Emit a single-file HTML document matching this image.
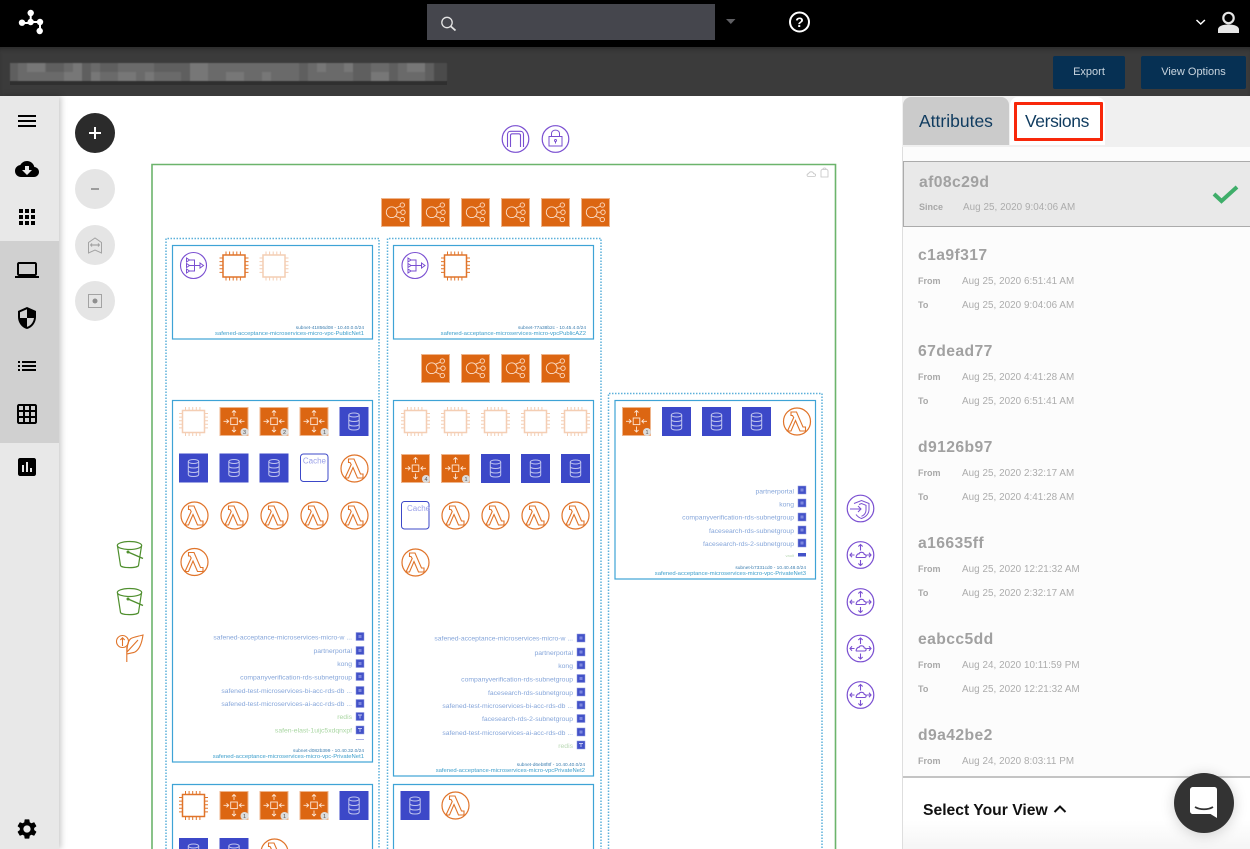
<!DOCTYPE html>
<html><head><meta charset="utf-8"><title>Versions</title>
<style>
*{box-sizing:border-box}
html,body{margin:0;padding:0;width:1250px;height:849px;overflow:hidden;background:#fff;font-family:"Liberation Sans",sans-serif}
.a{position:absolute}
#top{left:0;top:0;width:1250px;height:47px;background:#000}
#sub{left:0;top:47px;width:1250px;height:49px;background:#3b3b3b;box-shadow:inset 0 4px 4px -2px #2a2a2a}
#side{left:0;top:96px;width:59px;height:753px;background:#e8e8e8;box-shadow:2px 0 6px rgba(0,0,0,.22)}
#act{left:0;top:241px;width:59px;height:202px;background:#d0d0d0}
.btn{top:56px;height:33px;background:#063053;color:#c9d5df;font-size:11px;line-height:33px;text-align:center;border-radius:2px}
#panel{left:902px;top:96px;width:348px;height:753px;background:#fcfcfc}
#line{left:0;top:0;width:1px;height:753px;background:#dedede}
#tabs{left:0;top:0;width:348px;height:51px;background:#f0f0f0}
#t1{left:1px;top:1px;width:106px;height:48px;background:#cbcbcb;border-radius:8px 8px 0 0;color:#0f3b5f;font-size:17.5px;line-height:49px;padding-left:16px}
#t2{left:108px;top:1px;width:95px;height:48px;background:#fff;border-radius:8px 8px 0 0}
#t3{left:112px;top:6px;width:89px;height:39px;border:3px solid #f8280a;border-radius:1px;color:#0f3b5f;font-size:17.5px;letter-spacing:-.4px;line-height:33px;padding-left:8px}
#sel{left:1px;top:65px;width:347px;height:66px;background:#e9e9e9;border:1px solid #ababab;border-right:0}
.h{color:#a1a1a1;font-weight:bold;font-size:15.7px;line-height:18px;letter-spacing:.4px;white-space:nowrap;margin-top:1px}
.l{color:#a8a8a8;font-weight:bold;font-size:9px;line-height:12px}
.d{color:#acacac;font-size:9.85px;line-height:12px;white-space:nowrap;letter-spacing:.05px;margin-top:1px}
#foot{left:0;top:680px;width:348px;height:73px;background:linear-gradient(#fff,#fff 60%,#f5f5f5);border-top:2px solid #c4c4c4}
#sv{left:21px;top:705px;font-size:15.7px;font-weight:bold;color:#111;line-height:20px;white-space:nowrap}
</style></head><body>
<div class="a" id="top"></div>
<div class="a" id="sub"></div>
<div class="a" id="side"></div>
<div class="a" id="act"></div>
<div class="a" style="left:427px;top:4px;width:288px;height:36px;background:#45464d"></div>
<div class="a btn" style="left:1053px;width:72px">Export</div>
<div class="a btn" style="left:1141px;width:105px">View Options</div>

<svg class="a" style="left:0;top:0" width="1250" height="849" viewBox="0 0 1250 849" xmlns="http://www.w3.org/2000/svg">
<defs>
<filter id="bl"><feGaussianBlur stdDeviation=".5"/></filter>
<g id="elb"><rect x=".5" y=".5" width="28" height="28" fill="#dc6612" stroke="#efb58c"/><g fill="none" stroke="#fbdcc6" stroke-width=".9"><circle cx="10.7" cy="14.2" r="5.4"/><circle cx="21.3" cy="7" r="2.2"/><circle cx="22" cy="14.2" r="2.2"/><circle cx="21.3" cy="21.5" r="2.2"/><path d="M16 14.2h3.8M14.5 10.2l5-2.2M14.5 18.2l5 2.2"/></g></g>
<g id="chip"><rect x="3.5" y="3.5" width="22" height="22" fill="#fff" stroke="#e0742a" stroke-width="1.5"/><g stroke="#e0742a" stroke-width="3" stroke-dasharray="1 2.6" fill="none"><path d="M6 1.5H24M6 27.5H24M1.5 6V24M27.5 6V24"/></g></g>
<g id="scale"><rect x=".5" y=".5" width="28" height="28" fill="#dc6612" stroke="#efb58c"/><g fill="none" stroke="#fde6d6" stroke-width=".9"><rect x="11.2" y="11" width="6.6" height="6.6"/><path d="M14.5 9V3.500M12.500 5.500l2-2 2 2M14.500 19.500V25M12.500 23l2 2 2-2M9.200 14.300H4M7 12.300l2.200 2-2.200 2M19.800 14.300H25M22 12.300l-2.200 2 2.200 2"/></g></g>
<g id="db"><rect width="29" height="29" fill="#3c48c8"/><g fill="none" stroke="#bfc4ee" stroke-width="1"><ellipse cx="14.500" cy="8" rx="5.200" ry="2"/><path d="M9.300 8V21c0 1.200 2.300 2 5.200 2s5.200-.8 5.200-2V8M9.300 12.500c0 1.200 2.300 2 5.200 2s5.200-.8 5.200-2M9.300 17c0 1.200 2.300 2 5.200 2s5.200-.8 5.200-2"/></g></g>
<g id="lam"><circle cx="14.500" cy="14.500" r="13.500" fill="#fff" stroke="#e0742a" stroke-width="1.200"/><path d="M8.500 5h5.500l6.500 15h2.500v4h-5.500L13 13.500 8.500 24H5l6.200-13.500-1.200-2H8.500z" fill="none" stroke="#e0742a" stroke-width="1.100"/></g>
<g id="b1"><circle cx="25" cy="25" r="4" fill="#dcdcdc"/><text x="25" y="27" font-size="5.500" text-anchor="middle" fill="#555">1</text></g>
<g id="b2"><circle cx="25" cy="25" r="4" fill="#dcdcdc"/><text x="25" y="27" font-size="5.500" text-anchor="middle" fill="#555">2</text></g>
<g id="b3"><circle cx="25" cy="25" r="4" fill="#dcdcdc"/><text x="25" y="27" font-size="5.500" text-anchor="middle" fill="#555">3</text></g>
<g id="b4"><circle cx="25" cy="25" r="4" fill="#dcdcdc"/><text x="25" y="27" font-size="5.500" text-anchor="middle" fill="#555">4</text></g>
<g id="nat"><circle cx="13.500" cy="13.500" r="13" fill="#fff" stroke="#7a4fd1" stroke-width="1.100"/><g fill="none" stroke="#7a4fd1" stroke-width="1"><path d="M6.500 6 9.500 8 6.500 10zM6.500 11.500l3 2-3 2zM6.500 17l3 2-3 2zM20 11l3.500 2.500-3.500 2.500zM9.500 8h5v11h-5M9.500 13.500H20M14.500 13.500H20"/></g></g>
<g id="gw"><circle cx="14" cy="14" r="13.300" fill="#fff" stroke="#7a4fd1" stroke-width="1.200"/><g fill="none" stroke="#7a4fd1" stroke-width="1.100"><path d="M14 9.500V3.500M11.800 5.500 14 3.500l2.200 2M14 19V24.500M11.800 22.500l2.200 2 2.200-2M8 14H3.500M5.500 11.800 3.500 14l2 2.200M20 14h4.500M22.500 11.800l2 2.200-2 2.200"/><path d="M10 16.500h8c2.200 0 2.200-3-.2-3-.4-2.600-4.600-3-5.300-.6-2-.6-3.600 3.600-2.500 3.600z"/></g></g>
<g id="mini"><rect width="8" height="8" fill="#4352c8" stroke="#8e97e0" stroke-width=".5"/><rect x="2.500" y="2.500" width="3" height="3" fill="#7f89de"/></g>
<g id="mg"><rect width="8" height="8" fill="#4352c8" stroke="#8e97e0" stroke-width=".5"/><path d="M2 2.500h4M4 2.500V6" stroke="#c3c8f2" stroke-width=".9"/></g>
<g id="bucket" fill="none" stroke="#4f8f2e" stroke-width="1.200"><ellipse cx="12.500" cy="4.500" rx="12.200" ry="4"/><path d="M.5 5 3.500 24.500c1 2.800 17 2.800 18 0L24.500 5"/><path d="M11 11l15 6.500" stroke-width="1.400"/><circle cx="11" cy="11" r=".9" fill="#4f8f2e"/></g>
</defs>

<!-- logo -->
<g fill="#fff" stroke="#fff"><path d="M30.700 13V22H40V31M22 23H30.700" stroke-width="2" fill="none"/><g stroke="none"><circle cx="30.700" cy="13" r="3.200"/><circle cx="30.700" cy="22" r="3.200"/><circle cx="22" cy="22.700" r="3.200"/><circle cx="40" cy="22" r="3.200"/><circle cx="39.700" cy="31" r="3.200"/></g></g>
<!-- top icons -->
<g fill="none" stroke="#e4e4e4"><circle cx="447" cy="22.500" r="5.200" stroke-width="1.300"/><path d="M451 26.500l4.500 4" stroke-width="1.800"/></g>
<path d="M726 19h9.500l-4.700 5z" fill="#5f5f63"/>
<circle cx="799.500" cy="22" r="9.500" fill="none" stroke="#fff" stroke-width="2"/>
<text x="799.500" y="27.200" text-anchor="middle" font-size="14" font-weight="bold" fill="#fff">?</text>
<path d="M1196.500 20l4.200 4 4.200-4" fill="none" stroke="#fff" stroke-width="1.500"/>
<circle cx="1228.500" cy="18" r="5.200" fill="none" stroke="#e6e6e6" stroke-width="2.200"/>
<path d="M1218 33v-3.500c0-3 4-5 10.500-5s10.500 2 10.500 5V33z" fill="#e6e6e6"/>

<!-- mosaic -->
<rect x="10" y="81" width="437" height="4" fill="#2f2f2f"/>
<g filter="url(#bl)">
<rect x="10" y="63" width="437" height="18" fill="#6a6a6a"/>
<g fill="#777"><rect x="27" y="63" width="18" height="9"/><rect x="64" y="72" width="18" height="9"/><rect x="91" y="72" width="9" height="9"/><rect x="118" y="72" width="18" height="9"/><rect x="145" y="72" width="9" height="9"/><rect x="190" y="63" width="18" height="18"/><rect x="226" y="72" width="18" height="9"/><rect x="262" y="72" width="9" height="9"/><rect x="317" y="63" width="9" height="9"/><rect x="344" y="63" width="9" height="9"/><rect x="371" y="72" width="18" height="9"/><rect x="407" y="63" width="18" height="9"/><rect x="73" y="63" width="9" height="9"/></g>
<g fill="#5e5e5e"><rect x="10" y="63" width="8" height="18"/><rect x="46" y="63" width="18" height="9"/><rect x="82" y="63" width="9" height="18"/><rect x="100" y="63" width="18" height="9"/><rect x="154" y="63" width="27" height="9"/><rect x="181" y="63" width="9" height="18"/><rect x="299" y="63" width="9" height="18"/><rect x="353" y="63" width="18" height="18"/><rect x="389" y="63" width="9" height="18"/><rect x="425" y="63" width="9" height="18"/><rect x="434" y="63" width="13" height="18" fill="#4c4c4c"/></g>
</g>

<!-- sidebar icons -->
<g fill="#000">
<rect x="18" y="115" width="18" height="2"/><rect x="18" y="120" width="18" height="2"/><rect x="18" y="125" width="18" height="2"/>
<path transform="translate(15 157)" d="M19.350 10.040C18.670 6.590 15.640 4 12 4 9.110 4 6.600 5.640 5.350 8.040 2.340 8.360 0 10.910 0 14c0 3.310 2.690 6 6 6h13c2.760 0 5-2.240 5-5 0-2.640-2.050-4.780-4.650-4.960zM17 13l-5 5-5-5h3V9h4v4h3z"/>
<g><rect x="19" y="209" width="4" height="4"/><rect x="25" y="209" width="4" height="4"/><rect x="31" y="209" width="4" height="4"/><rect x="19" y="215" width="4" height="4"/><rect x="25" y="215" width="4" height="4"/><rect x="31" y="215" width="4" height="4"/><rect x="19" y="221" width="4" height="4"/><rect x="25" y="221" width="4" height="4"/><rect x="31" y="221" width="4" height="4"/></g>
<path transform="translate(15 258)" d="M20 18c1.100 0 1.990-.9 1.990-2L22 6c0-1.100-.9-2-2-2H4c-1.100 0-2 .9-2 2v10c0 1.100.9 2 2 2H0v2h24v-2h-4zM4 6h16v10H4V6z"/>
<path transform="translate(15 306)" d="M12 1L3 5v6c0 5.550 3.840 10.740 9 12 5.160-1.260 9-6.450 9-12V5l-9-4zm0 10.990h7c-.53 4.120-3.280 7.790-7 8.940V12H5V6.300l7-3.110v8.800z"/>
<path transform="translate(15 354)" d="M3 13h2v-2H3v2zm0 4h2v-2H3v2zm0-8h2V7H3v2zm4 4h14v-2H7v2zm0 4h14v-2H7v2zM7 7v2h14V7H7z"/>
<path transform="translate(15 402)" d="M20 2H4c-1.100 0-2 .9-2 2v16c0 1.100.9 2 2 2h16c1.100 0 2-.9 2-2V4c0-1.100-.9-2-2-2zM8 20H4v-4h4v4zm0-6H4v-4h4v4zm0-6H4V4h4v4zm6 12h-4v-4h4v4zm0-6h-4v-4h4v4zm0-6h-4V4h4v4zm6 12h-4v-4h4v4zm0-6h-4v-4h4v4zm0-6h-4V4h4v4z"/>
<path transform="translate(15 455)" d="M19 3H5c-1.100 0-2 .9-2 2v14c0 1.100.9 2 2 2h14c1.100 0 2-.9 2-2V5c0-1.100-.9-2-2-2zM9 17H7v-7h2v7zm4 0h-2V7h2v10zm4 0h-2v-4h2v4z"/>
<path transform="translate(15 817)" d="M19.140 12.940c.04-.3.06-.61.06-.94 0-.32-.02-.64-.07-.94l2.030-1.580c.18-.14.23-.41.12-.61l-1.920-3.320c-.12-.22-.37-.29-.59-.22l-2.390.96c-.5-.38-1.030-.7-1.620-.94l-.36-2.540c-.04-.24-.24-.41-.48-.41h-3.840c-.24 0-.43.17-.47.41l-.36 2.540c-.59.24-1.130.57-1.620.94l-2.390-.96c-.22-.08-.47 0-.59.22L2.740 8.870c-.12.21-.08.47.12.61l2.030 1.580c-.05.3-.09.63-.09.94s.02.64.07.94l-2.030 1.580c-.18.14-.23.41-.12.61l1.920 3.320c.12.22.37.29.59.22l2.390-.96c.5.38 1.030.7 1.620.94l.36 2.540c.05.24.24.41.48.41h3.840c.24 0 .44-.17.47-.41l.36-2.540c.59-.24 1.130-.56 1.620-.94l2.390.96c.22.08.47 0 .59-.22l1.920-3.320c.12-.22.07-.47-.12-.61l-2.010-1.580zM12 15.600c-1.980 0-3.600-1.620-3.600-3.600s1.620-3.600 3.600-3.600 3.600 1.620 3.600 3.600-1.620 3.600-3.600 3.600z"/>
</g>

<!-- zoom buttons -->
<circle cx="95" cy="133" r="20" fill="#2b2b2b"/><path d="M95 127v12M89 133h12" stroke="#fff" stroke-width="2"/>
<circle cx="95" cy="189" r="20" fill="#e5e5e5"/><path d="M91 189h8" stroke="#9c9c9c" stroke-width="2"/>
<circle cx="95" cy="245" r="20" fill="#e5e5e5"/><g fill="none" stroke="#a3a3a3" stroke-width="1"><path d="M88.500 242.500 95 238l6.500 4.500V253l-6.500-3-6.500 3z"/><path d="M90.500 245h9M90.500 245l1.500-1.500M90.500 245l1.500 1.500M99.500 245l-1.500-1.500M99.500 245l-1.500 1.500" stroke-width="1.200"/></g>
<circle cx="95" cy="301" r="20" fill="#e5e5e5"/><rect x="88.500" y="294.500" width="13" height="13" fill="none" stroke="#a3a3a3"/><circle cx="95" cy="301" r="2.500" fill="#8f8f8f"/>

<!-- top circles -->
<g fill="none" stroke="#7a4fd1"><circle cx="515.500" cy="139" r="13.300" stroke-width="1.200"/><path d="M507.500 147V134.500c0-1.800 1.200-3.200 3-3.200h10c1.800 0 3 1.400 3 3.200V147M510.500 147V135.500c0-1 .7-1.700 1.700-1.700h6.600c1 0 1.700.7 1.700 1.700V147" stroke-width="1.100"/><circle cx="555.500" cy="139" r="13.300" stroke-width="1.200"/><rect x="549" y="136.500" width="13" height="9.500" stroke-width="1"/><path d="M551.500 136.500v-3c0-4.500 8-4.500 8 0v3M555.500 143.500v-2" stroke-width="1"/><circle cx="555.500" cy="140.500" r="1"/></g>

<!-- VPC frame -->
<path d="M152 849V164.500H835.500V849" fill="none" stroke="#6cb46c" stroke-width="1.600"/>
<g fill="none" stroke="#c4c4c4" stroke-width=".8"><path d="M808.500 176.500c-2 0-2-2.800.2-2.800.5-2.500 4.300-2.500 5 0 2.500 0 2.500 2.800 0 2.800zM821 177v-6c0-1 .5-1.500 1.500-1.500h4c1 0 1.500.5 1.500 1.500v6zM822.800 169.500c0-2 3.400-2 3.400 0"/></g>
<g fill="none" stroke="#5cb0da" stroke-width="1.500" stroke-dasharray="1.500 1.500">
<path d="M166 849V238.500H379V849"/><path d="M387.500 849V238.500H601V849"/><path d="M608.500 849V393.500H822V849"/>
</g>
<g fill="none" stroke="#3ea3d6" stroke-width="1.200">
<rect x="172.500" y="245.500" width="200" height="93.500"/><rect x="393.500" y="245.500" width="200" height="93.500"/>
<rect x="172.500" y="400.500" width="200" height="361.500"/><rect x="393.500" y="400.500" width="200" height="375.500"/>
<rect x="615" y="400.500" width="200.500" height="178.500"/>
<path d="M172.500 849V784.500H372.500V849M393.500 849V784.500H593.500V849"/>
</g>

<!-- ELB rows -->
<use href="#elb" x="381" y="198"/><use href="#elb" x="421" y="198"/><use href="#elb" x="461" y="198"/><use href="#elb" x="501" y="198"/><use href="#elb" x="541" y="198"/><use href="#elb" x="581" y="198"/>
<use href="#elb" x="421" y="354"/><use href="#elb" x="461" y="354"/><use href="#elb" x="501" y="354"/><use href="#elb" x="541" y="354"/>

<!-- public subnets -->
<use href="#nat" x="180" y="252"/><use href="#chip" x="219.500" y="251.500"/><use href="#chip" x="259.500" y="251.500" opacity=".35"/>
<use href="#nat" x="401.500" y="252"/><use href="#chip" x="441" y="251.500"/>
<text x="364" y="329" font-size="4.800" text-anchor="end" fill="#3d7fb0">subnet-41856d08 - 10.40.0.0/24</text>
<text x="364" y="335" font-size="5.900" text-anchor="end" fill="#3d9fcc">safened-acceptance-microservices-micro-vpc-PublicNet1</text>
<text x="586" y="329" font-size="4.800" text-anchor="end" fill="#3d7fb0">subnet-77a38b2c - 10.45.4.0/24</text>
<text x="586" y="335" font-size="5.900" text-anchor="end" fill="#3d9fcc">safened-acceptance-microservices-micro-vpcPublicAZ2</text>

<!-- subnet 1 -->
<use href="#chip" x="179" y="407" opacity=".35"/>
<use href="#scale" x="219.500" y="407"/><use href="#b3" x="219.500" y="407"/>
<use href="#scale" x="259.500" y="407"/><use href="#b2" x="259.500" y="407"/>
<use href="#scale" x="299.500" y="407"/><use href="#b1" x="299.500" y="407"/>
<use href="#db" x="339.500" y="407"/>
<use href="#db" x="179" y="453.500"/><use href="#db" x="219.500" y="453.500"/><use href="#db" x="259.500" y="453.500"/>
<rect x="300.500" y="454" width="27.500" height="27.500" rx="3" fill="#fff" stroke="#3c48c8" stroke-width="1"/><text x="326" y="463.500" font-size="8" text-anchor="end" fill="#9aa0e8">Cache</text>
<use href="#lam" x="340" y="454"/>
<use href="#lam" x="180" y="501"/><use href="#lam" x="220" y="501"/><use href="#lam" x="260" y="501"/><use href="#lam" x="300" y="501"/><use href="#lam" x="340" y="501"/>
<use href="#lam" x="180" y="547.500"/>
<g font-size="6.800" text-anchor="end" fill="#86a6da">
<text x="352" y="639.300">safened-acceptance-microservices-micro-w ...</text>
<text x="352" y="653">partnerportal</text>
<text x="352" y="666">kong</text>
<text x="352" y="679.300">companyverification-rds-subnetgroup</text>
<text x="352" y="693">safened-test-microservices-bi-acc-rds-db ...</text>
<text x="352" y="706">safened-test-microservices-ai-acc-rds-db ...</text>
<text x="352" y="719" fill="#a9d6a2">redis</text>
<text x="352" y="732.300" fill="#a9d6a2">safen-elast-1uijc5xdqnxpf</text>
</g>
<use href="#mini" x="356" y="632.500"/><use href="#mini" x="356" y="646.500"/><use href="#mini" x="356" y="659.500"/><use href="#mini" x="356" y="672.500"/><use href="#mini" x="356" y="686.500"/><use href="#mini" x="356" y="699.500"/><use href="#mg" x="356" y="712.500"/><use href="#mg" x="356" y="726"/>
<rect x="356" y="739" width="8" height="1" fill="#aab0e8"/>
<text x="364" y="752" font-size="4.800" text-anchor="end" fill="#3d7fb0">subnet-d082b399 - 10.40.32.0/24</text>
<text x="364" y="758" font-size="5.900" text-anchor="end" fill="#3d9fcc">safened-acceptance-microservices-micro-vpc-PrivateNet1</text>

<!-- subnet 2 -->
<use href="#chip" x="401" y="407" opacity=".35"/><use href="#chip" x="441" y="407" opacity=".35"/><use href="#chip" x="481" y="407" opacity=".35"/><use href="#chip" x="521" y="407" opacity=".35"/><use href="#chip" x="561" y="407" opacity=".35"/>
<use href="#scale" x="401" y="454"/><use href="#b4" x="401" y="454"/>
<use href="#scale" x="441" y="454"/><use href="#b1" x="441" y="454"/>
<use href="#db" x="481" y="454"/><use href="#db" x="521" y="454"/><use href="#db" x="561" y="454"/>
<rect x="401.500" y="501.500" width="27.500" height="27.500" rx="3" fill="#fff" stroke="#3c48c8" stroke-width="1"/><text x="407" y="511" font-size="8" fill="#9aa0e8">Cache</text>
<use href="#lam" x="441" y="501"/><use href="#lam" x="481" y="501"/><use href="#lam" x="521" y="501"/><use href="#lam" x="561" y="501"/>
<use href="#lam" x="401" y="548"/>
<g font-size="6.800" text-anchor="end" fill="#86a6da">
<text x="573" y="640.300">safened-acceptance-microservices-micro-w ...</text>
<text x="573" y="655">partnerportal</text>
<text x="573" y="668">kong</text>
<text x="573" y="681.300">companyverification-rds-subnetgroup</text>
<text x="573" y="695">facesearch-rds-subnetgroup</text>
<text x="573" y="708">safened-test-microservices-bi-acc-rds-db ...</text>
<text x="573" y="721">facesearch-rds-2-subnetgroup</text>
<text x="573" y="735">safened-test-microservices-ai-acc-rds-db ...</text>
<text x="573" y="748" fill="#b9d8b4">redis</text>
</g>
<use href="#mini" x="577" y="634"/><use href="#mini" x="577" y="648"/><use href="#mini" x="577" y="661"/><use href="#mini" x="577" y="674.500"/><use href="#mini" x="577" y="688"/><use href="#mini" x="577" y="701"/><use href="#mini" x="577" y="714.500"/><use href="#mini" x="577" y="728"/><use href="#mg" x="577" y="741"/>
<text x="585" y="766" font-size="4.800" text-anchor="end" fill="#3d7fb0">subnet-d6eb8f8f - 10.40.40.0/24</text>
<text x="585" y="772" font-size="5.900" text-anchor="end" fill="#3d9fcc">safened-acceptance-microservices-micro-vpcPrivateNet2</text>

<!-- subnet 3 -->
<use href="#scale" x="622" y="407"/><use href="#b1" x="622" y="407"/>
<use href="#db" x="662" y="407"/><use href="#db" x="702" y="407"/><use href="#db" x="742" y="407"/>
<use href="#lam" x="782.500" y="407"/>
<g font-size="6.800" text-anchor="end" fill="#86a6da">
<text x="794" y="493.300">partnerportal</text>
<text x="794" y="506.300">kong</text>
<text x="794" y="519.300">companyverification-rds-subnetgroup</text>
<text x="794" y="533">facesearch-rds-subnetgroup</text>
<text x="794" y="546">facesearch-rds-2-subnetgroup</text>
<text x="794" y="557" font-size="4" fill="#b9d8b4">vault</text>
</g>
<use href="#mini" x="798" y="486"/><use href="#mini" x="798" y="499"/><use href="#mini" x="798" y="513"/><use href="#mini" x="798" y="526"/><use href="#mini" x="798" y="539"/>
<rect x="798" y="553" width="8" height="3.500" fill="#4352c8"/>
<text x="806" y="569" font-size="4.800" text-anchor="end" fill="#3d7fb0">subnet-b7331cd0 - 10.40.48.0/24</text>
<text x="806" y="575" font-size="5.900" text-anchor="end" fill="#3d9fcc">safened-acceptance-microservices-micro-vpc-PrivateNet3</text>

<!-- bottom subnets -->
<use href="#chip" x="179" y="791"/>
<use href="#scale" x="219.500" y="791"/><use href="#b1" x="219.500" y="791"/>
<use href="#scale" x="259.500" y="791"/><use href="#b1" x="259.500" y="791"/>
<use href="#scale" x="299.500" y="791"/><use href="#b1" x="299.500" y="791"/>
<use href="#db" x="339.500" y="791"/>
<use href="#db" x="179" y="838"/><use href="#db" x="219.500" y="838"/><use href="#lam" x="260" y="838"/>
<use href="#db" x="400.500" y="791"/><use href="#lam" x="441" y="791"/>

<!-- left services -->
<use href="#bucket" x="117" y="541"/><use href="#bucket" x="117" y="588"/>
<g fill="none" stroke="#e0742a" stroke-width="1.100"><circle cx="122.500" cy="641.500" r="6"/><path d="M122.500 646v-8M120.300 640l2.200-2.200 2.200 2.200M126.800 662v-15M127 652c0-8 2-13 5-14 3-1 7-2 11-3-1 7-3 14-8 17-2 1-5 1-8 2M127 652l11-12"/></g>

<!-- right services -->
<g fill="none" stroke="#7a4fd1"><circle cx="860.500" cy="508.500" r="13.300" stroke-width="1.200"/><path d="M854 503.500l7.500-3 7.500 3v6c0 4-3 7.500-7.500 9-2-.6-4-2-5.500-4M859 504.500l2.500-1 4.500 1.800v4.700c0 3-2 5.300-4.500 6.300M850 509h11M858 506l3 3-3 3" stroke-width="1"/></g>
<use href="#gw" x="846.500" y="541"/><use href="#gw" x="846.500" y="588"/><use href="#gw" x="846.500" y="634.500"/><use href="#gw" x="846.500" y="681"/>
</svg>

<div class="a" id="panel">
<div class="a" id="tabs"></div>
<div class="a" id="t1">Attributes</div>
<div class="a" id="t2"></div>
<div class="a" id="t3">Versions</div>
<div class="a" id="sel"></div>
<svg class="a" style="left:310px;top:88px" width="28" height="22" viewBox="0 0 28 22"><path d="M2 10l7.500 7L25 3" fill="none" stroke="#3fae6a" stroke-width="4"/></svg>

<div class="a h" style="left:17px;top:77px">af08c29d</div><div class="a l" style="left:17px;top:105px">Since</div><div class="a d" style="left:61px;top:105px">Aug 25, 2020 9:04:06 AM</div>

<div class="a h" style="left:16px;top:150px">c1a9f317</div><div class="a l" style="left:16px;top:179px">From</div><div class="a d" style="left:60px;top:179px">Aug 25, 2020 6:51:41 AM</div><div class="a l" style="left:16px;top:203px">To</div><div class="a d" style="left:60px;top:203px">Aug 25, 2020 9:04:06 AM</div>

<div class="a h" style="left:16px;top:246px">67dead77</div><div class="a l" style="left:16px;top:275px">From</div><div class="a d" style="left:60px;top:275px">Aug 25, 2020 4:41:28 AM</div><div class="a l" style="left:16px;top:299px">To</div><div class="a d" style="left:60px;top:299px">Aug 25, 2020 6:51:41 AM</div>

<div class="a h" style="left:16px;top:342px">d9126b97</div><div class="a l" style="left:16px;top:371px">From</div><div class="a d" style="left:60px;top:371px">Aug 25, 2020 2:32:17 AM</div><div class="a l" style="left:16px;top:395px">To</div><div class="a d" style="left:60px;top:395px">Aug 25, 2020 4:41:28 AM</div>

<div class="a h" style="left:16px;top:438px">a16635ff</div><div class="a l" style="left:16px;top:467px">From</div><div class="a d" style="left:60px;top:467px">Aug 25, 2020 12:21:32 AM</div><div class="a l" style="left:16px;top:491px">To</div><div class="a d" style="left:60px;top:491px">Aug 25, 2020 2:32:17 AM</div>

<div class="a h" style="left:16px;top:534px">eabcc5dd</div><div class="a l" style="left:16px;top:563px">From</div><div class="a d" style="left:60px;top:563px">Aug 24, 2020 10:11:59 PM</div><div class="a l" style="left:16px;top:587px">To</div><div class="a d" style="left:60px;top:587px">Aug 25, 2020 12:21:32 AM</div>

<div class="a h" style="left:16px;top:630px">d9a42be2</div><div class="a l" style="left:16px;top:659px">From</div><div class="a d" style="left:60px;top:659px">Aug 24, 2020 8:03:11 PM</div>

<div class="a" id="foot"></div>
<div class="a" id="line" style="top:51px;height:702px"></div>
<div class="a" id="sv">Select Your View</div>
<svg class="a" style="left:150px;top:707px" width="16" height="12" viewBox="0 0 16 12"><path d="M2.500 9 8 3.500 13.500 9" fill="none" stroke="#111" stroke-width="2"/></svg>
</div>

<div class="a" style="left:1174px;top:773px;width:60px;height:60px;border-radius:50%;background:#333;box-shadow:0 2px 14px rgba(0,0,0,.18)"></div>
<svg class="a" style="left:1189px;top:786px" width="30" height="34" viewBox="0 0 30 34"><path d="M3 1h21c2 0 3 1 3 3v28l-6.500-4H3c-1.500 0-3-1-3-3V4c0-2 1.500-3 3-3z" fill="#fff" transform="translate(1 0)"/><path d="M6 21c5 3 13 3 18 0" fill="none" stroke="#333" stroke-width="1.800"/></svg>
</body></html>
